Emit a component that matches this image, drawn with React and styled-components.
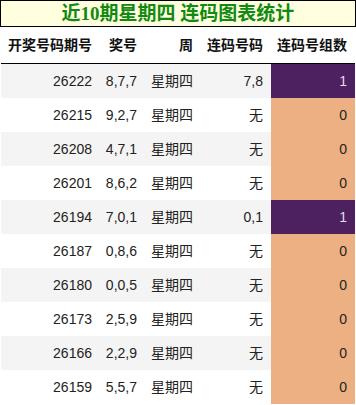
import React from "react";
import styled, { createGlobalStyle } from "styled-components";

const GlobalStyle = createGlobalStyle`
  body {
    margin: 0;
    background: #fff;
    font-family: "Liberation Sans", Arial, "Noto Sans CJK SC", sans-serif;
  }
`;

const Page = styled.div`
  width: 356px;
`;

const Title = styled.div`
  height: 25px;
  line-height: 25px;
  border: 1px solid #000;
  background: #ffffe0;
  color: #128a12;
  font-family: "Liberation Serif", "Noto Sans CJK SC", serif;
  font-size: 19px;
  font-weight: bold;
  text-align: center;
`;

const Table = styled.div`
  display: grid;
  grid-template-columns: 99px 45px 56px 70px 84px;
  margin: 0 1px;
`;

const Row = styled.div`
  display: contents;
`;

const HeadCell = styled.div`
  height: 36px;
  line-height: 36px;
  border-bottom: 1px solid #000;
  padding-right: 8px;
  text-align: right;
  font-size: 14px;
  font-weight: bold;
  color: #111;
  white-space: nowrap;
`;

const Cell = styled.div`
  height: 34px;
  line-height: 34px;
  padding-right: 8px;
  text-align: right;
  font-size: 14px;
  color: #222;
  white-space: nowrap;
  background: ${(p) => (p.$odd ? "#f4f4f4" : "#fff")};
`;

const CountCell = styled(Cell)`
  background: ${(p) => (p.$hit ? "#4d2160" : "#edb083")};
  color: ${(p) => (p.$hit ? "#e6d8f0" : "#222")};
`;

const rows = [
  ["26222", "8,7,7", "7,8", 1],
  ["26215", "9,2,7", "无", 0],
  ["26208", "4,7,1", "无", 0],
  ["26201", "8,6,2", "无", 0],
  ["26194", "7,0,1", "0,1", 1],
  ["26187", "0,8,6", "无", 0],
  ["26180", "0,0,5", "无", 0],
  ["26173", "2,5,9", "无", 0],
  ["26166", "2,2,9", "无", 0],
  ["26159", "5,5,7", "无", 0],
];

const headers = ["开奖号码期号", "奖号", "周", "连码号码", "连码号组数"];

export default function App() {
  return (
    <Page>
      <GlobalStyle />
      <Title>近10期星期四 连码图表统计</Title>
      <Table>
        <Row>
          {headers.map((h) => (
            <HeadCell key={h}>{h}</HeadCell>
          ))}
        </Row>
        {rows.map(([issue, nums, pair, count], i) => {
          const odd = i % 2 === 0;
          return (
            <Row key={issue}>
              <Cell $odd={odd}>{issue}</Cell>
              <Cell $odd={odd}>{nums}</Cell>
              <Cell $odd={odd}>星期四</Cell>
              <Cell $odd={odd}>{pair}</Cell>
              <CountCell $hit={count > 0}>{count}</CountCell>
            </Row>
          );
        })}
      </Table>
    </Page>
  );
}
